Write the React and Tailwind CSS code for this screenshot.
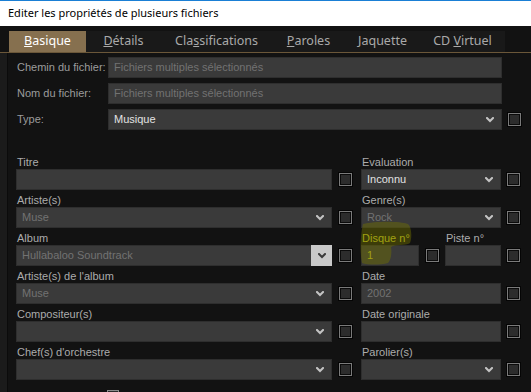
import React from 'react';

const Chevron = ({ dark }) => (
  <svg width="8" height="6" viewBox="0 0 8 6" className="shrink-0">
    <path
      d="M1 1 L4 4 L7 1"
      fill="none"
      stroke={dark ? '#3a3a3a' : '#c4c4c4'}
      strokeWidth="2"
      strokeLinecap="square"
    />
  </svg>
);

const Check = () => (
  <div className="w-[13px] h-[13px] shrink-0 border border-[#7a7a7a] bg-[#2c2c2c] shadow-[0_0_0_1px_#050505,inset_0_0_0_1px_#0a0a0a]" />
);

const Field = ({ value, tone = 'muted', select, button, className = '' }) => {
  const colors = {
    muted: 'text-[#727272]',
    light: 'text-[#e2e2e2]',
    yellow: 'text-[#c6c61e]',
  };
  return (
    <div
      className={`h-[21px] flex items-center bg-[#3a3a3a] border border-[#2e2e2e] ${className}`}
    >
      <span className={`flex-1 pl-[5px] truncate ${colors[tone]}`}>{value}</span>
      {select && !button && (
        <span className="pr-[7px] flex items-center">
          <Chevron />
        </span>
      )}
      {button && (
        <span className="w-[21px] h-[21px] -mr-px bg-[#c9c9c9] flex items-center justify-center">
          <Chevron dark />
        </span>
      )}
    </div>
  );
};

const Label = ({ children, className = '' }) => (
  <div className={`h-[16px] flex items-end pl-px text-[#acacac] ${className}`}>
    <span className="relative top-[1px]">{children}</span>
  </div>
);

const TopRow = ({ label, children, check }) => (
  <div className="flex items-center h-[21px]">
    <div className="w-[92px] pl-px text-[#9c9c9c]">{label}</div>
    <div className="w-[394px]">{children}</div>
    {check && (
      <div className="ml-[6px]">
        <Check />
      </div>
    )}
  </div>
);

const Row = ({ left, right }) => (
  <div className="flex">
    <div className="w-[316px]">
      <Label>{left.label}</Label>
      {left.field}
    </div>
    <div className="w-[7px]" />
    <div className="mt-[16px] h-[21px] flex items-center">
      <Check />
    </div>
    <div className="w-[9px]" />
    {right}
  </div>
);

const RightCol = ({ label, field }) => (
  <>
    <div className="w-[140px]">
      <Label>{label}</Label>
      {field}
    </div>
    <div className="w-[6px]" />
    <div className="mt-[16px] h-[21px] flex items-center">
      <Check />
    </div>
  </>
);

const tabs = [
  { w: 'w-[77px]', label: <><u>B</u>asique</>, active: true },
  { w: 'w-[75px]', label: <><u>D</u>étails</> },
  { w: 'w-[111px]', label: <>Cla<u>s</u>sifications</> },
  { w: 'w-[73px]', label: <><u>P</u>aroles</> },
  { w: 'w-[75px]', label: <>Jaquette</> },
  { w: 'w-[85px]', label: <>CD <u>V</u>irtuel</> },
];

export default function App() {
  return (
    <div className="w-[531px] h-[392px] overflow-hidden bg-[#121212] relative font-['Liberation_Sans',Arial,sans-serif] text-[11px]">
      <div className="h-[26px] bg-white border-t border-[#1a7fd5] flex items-center pl-[8px] text-[11px] text-black font-['Noto_Sans',sans-serif]">
        Editer les propriétés de plusieurs fichiers
      </div>

      <div className="pt-[5px] pl-[9px] border-b border-[#6b5739]">
        <div className="flex h-[21px] w-[496px] bg-[#191919] font-['Noto_Sans',sans-serif] text-[12.5px]">
          {tabs.map((t, i) => (
            <div
              key={i}
              className={`${t.w} flex items-center justify-center ${
                t.active ? 'bg-[#86704f] text-white' : 'text-[#a9a9a9]'
              }`}
            >
              <span>{t.label}</span>
            </div>
          ))}
        </div>
      </div>

      <div className="flex">
        <div className="w-[8px] bg-[#1b1b1b] border-r border-[#0b0b0b] h-[340px]" />
        <div className="pl-[8px] pt-[4px]">
          <div className="flex flex-col gap-[5px]">
            <TopRow label="Chemin du fichier:">
              <Field value="Fichiers multiples sélectionnés" />
            </TopRow>
            <TopRow label="Nom du fichier:">
              <Field value="Fichiers multiples sélectionnés" />
            </TopRow>
            <TopRow label="Type:" check>
              <Field value="Musique" tone="light" select />
            </TopRow>
          </div>

          <div className="mt-[23px] flex flex-col gap-px">
            <Row
              left={{ label: 'Titre', field: <Field value="" /> }}
              right={<RightCol label="Evaluation" field={<Field value="Inconnu" tone="light" select />} />}
            />
            <Row
              left={{ label: 'Artiste(s)', field: <Field value="Muse" select /> }}
              right={<RightCol label="Genre(s)" field={<Field value="Rock" select />} />}
            />
            <Row
              left={{ label: 'Album', field: <Field value="Hullabaloo Soundtrack" select button /> }}
              right={
                <div className="flex relative">
                  <div className="w-[58px]">
                    <Label className="text-[#c8c820]">Disque n°</Label>
                    <Field value="1" tone="yellow" />
                  </div>
                  <div className="w-[7px]" />
                  <div className="mt-[16px] h-[21px] flex items-center">
                    <Check />
                  </div>
                  <div className="w-[6px]" />
                  <div className="w-[56px]">
                    <Label>Piste n°</Label>
                    <Field value="" />
                  </div>
                  <div className="w-[6px]" />
                  <div className="mt-[16px] h-[21px] flex items-center">
                    <Check />
                  </div>
                  <svg
                    width="52"
                    height="44"
                    viewBox="0 0 52 44"
                    className="absolute left-[-1px] top-[-8px] pointer-events-none"
                  >
                    <path
                      d="M3 3 C 15 0, 40 0, 48 3 C 52 7, 52 17, 50 22 C 45 25, 36 23, 31 26 C 32 32, 31 39, 28 42 C 20 44, 8 44, 2 42 C 0 33, 0 15, 3 3 Z"
                      fill="rgba(112,112,0,0.45)"
                    />
                  </svg>
                </div>
              }
            />
            <Row
              left={{ label: "Artiste(s) de l'album", field: <Field value="Muse" select /> }}
              right={<RightCol label="Date" field={<Field value="2002" />} />}
            />
            <Row
              left={{ label: 'Compositeur(s)', field: <Field value="" select /> }}
              right={<RightCol label="Date originale" field={<Field value="" />} />}
            />
            <Row
              left={{ label: "Chef(s) d'orchestre", field: <Field value="" select /> }}
              right={<RightCol label="Parolier(s)" field={<Field value="" select />} />}
            />
          </div>

          <div className="mt-[10px] ml-[91px] w-[12px] h-[12px] border border-[#8a8a8a] bg-[#2c2c2c]" />
        </div>
      </div>
    </div>
  );
}
